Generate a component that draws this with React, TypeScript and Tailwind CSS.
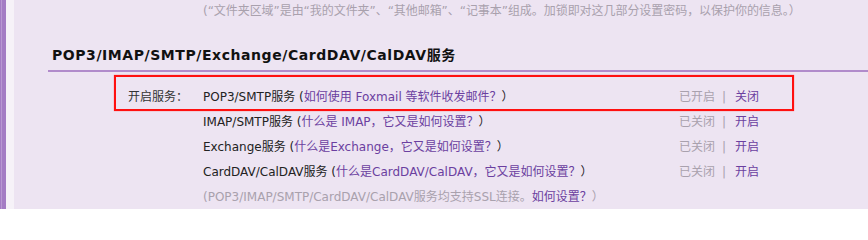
import React from 'react'

const font = { fontFamily: '"DejaVu Sans", "Noto Sans CJK SC", sans-serif' }

type Row = {
  name: string
  help: string
  on: boolean
}

const rows: Row[] = [
  { name: 'POP3/SMTP服务', help: '如何使用 Foxmail 等软件收发邮件？', on: true },
  { name: 'IMAP/SMTP服务', help: '什么是 IMAP，它又是如何设置？', on: false },
  { name: 'Exchange服务', help: '什么是Exchange，它又是如何设置？', on: false },
  { name: 'CardDAV/CalDAV服务', help: '什么是CardDAV/CalDAV，它又是如何设置？', on: false },
]

const ServiceRow = ({ row, label }: { row: Row; label?: string }) => (
  <div className="flex h-[25px] items-center">
    <div className="w-[75px] text-[#333]">{label}</div>
    <div className="w-[476px] whitespace-nowrap text-[#222]">
      {row.name} (<span className="text-[#6b3fa0]">{row.help}</span>）
    </div>
    <div className="flex items-center whitespace-nowrap">
      <span className="text-[#a9a1ad]">{row.on ? '已开启' : '已关闭'}</span>
      <span className="ml-[7px] mr-[9px] text-[#a9a1ad]">|</span>
      <span className="text-[#6b3fa0]">{row.on ? '关闭' : '开启'}</span>
    </div>
  </div>
)

export default function App() {
  return (
    <div className="flex h-[209px] w-[868px] overflow-hidden bg-[#ede4f2] text-[12px]" style={font}>
      <div className="w-[1px] bg-[#a47cc4]" />
      <div className="w-[1px] bg-[#b898d2]" />
      <div className="w-[4px] bg-[#a47cc4]" />
      <div className="w-[8px] bg-[#f6f2f8]" />

      <div className="flex-1">
        <div className="flex h-[22px] items-center pl-[189px] whitespace-nowrap tracking-[-0.05px] text-[#a9a1ad]">
          (“文件夹区域”是由“我的文件夹”、“其他邮箱”、“记事本”组成。加锁即对这几部分设置密码，以保护你的信息。）
        </div>

        <div className="ml-[34px] mt-[23px] border-b-2 border-[#b18bcb] pb-[5px] pl-[4px]">
          <h2 className="text-[14px] font-bold leading-[20px] tracking-[0.56px] text-[#111]">
            POP3/IMAP/SMTP/Exchange/CardDAV/CalDAV服务
          </h2>
        </div>

        <div className="relative mt-[12px] pl-[114px]">
          <div className="pointer-events-none absolute left-[100px] top-[-9px] h-[36px] w-[680px] border-2 border-[#ff1010] shadow-[0_0_1px_#ff6060]" />
          {rows.map((row, i) => (
            <ServiceRow key={row.name} row={row} label={i === 0 ? '开启服务：' : undefined} />
          ))}
          <div className="flex h-[25px] items-center pl-[75px] whitespace-nowrap text-[#a9a1ad]">
            (POP3/IMAP/SMTP/CardDAV/CalDAV服务均支持SSL连接。<span className="text-[#6b3fa0]">如何设置？</span>）
          </div>
        </div>
      </div>
    </div>
  )
}
